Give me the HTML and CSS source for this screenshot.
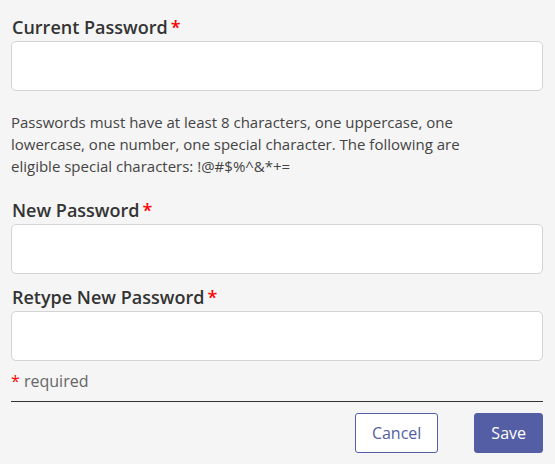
FILE: index.html
```html
<!DOCTYPE html>
<html lang="en">
<head>
<meta charset="utf-8">
<title>Change Password</title>
<link rel="stylesheet" href="styles.css">
</head>
<body>
<form class="form">
  <div class="field">
    <label class="label">Current Password<span class="req">*</span></label>
    <input class="input" type="password">
  </div>
  <p class="hint">Passwords must have at least 8 characters, one uppercase, one lowercase, one number, one special character. The following are eligible special characters: !@#$%^&amp;*+=</p>
  <div class="field">
    <label class="label">New Password<span class="req">*</span></label>
    <input class="input" type="password">
  </div>
  <div class="field field-tight">
    <label class="label">Retype New Password<span class="req">*</span></label>
    <input class="input" type="password">
  </div>
  <div class="required-note"><span class="req-small">*</span> required</div>
  <div class="actions">
    <button type="button" class="btn btn-outline">Cancel</button>
    <button type="button" class="btn btn-primary">Save</button>
  </div>
</form>
</body>
</html>
```

FILE: styles.css
```css
* {
  box-sizing: border-box;
}

html, body {
  margin: 0;
  background: #f5f5f5;
}

body {
  font-family: "Open Sans", "Noto Sans", sans-serif;
  color: #333;
}

.form {
  padding: 15px 12px 11px 11px;
  display: flex;
  flex-direction: column;
}

.field {
  display: flex;
  flex-direction: column;
}

.field-tight {
  margin-top: 11px;
}

.label {
  font-size: 18px;
  font-weight: 600;
  line-height: 24px;
  color: #333;
  margin: 0 0 2px 1px;
}

.req {
  color: #f00;
  margin-left: 3px;
}

.input {
  display: block;
  width: 100%;
  height: 50px;
  margin: 0;
  background: #fff;
  border: 1px solid #d4d4d4;
  border-radius: 5px;
  font: inherit;
  font-size: 16px;
  padding: 0 12px;
}

.hint {
  margin: 20px 0 21px;
  max-width: 480px;
  font-size: 15px;
  line-height: 22px;
  color: #444;
}

.required-note {
  margin-top: 9px;
  font-size: 16px;
  line-height: 22px;
  color: #666;
}

.req-small {
  color: #f00;
}

.actions {
  margin-top: 9px;
  border-top: 1px solid #333;
  padding-top: 11px;
  display: flex;
  justify-content: flex-end;
  gap: 36px;
}

.btn {
  height: 40px;
  padding: 0 16px;
  border-radius: 3px;
  font-family: "Open Sans", "Noto Sans", sans-serif;
  font-size: 16px;
  line-height: 38px;
  cursor: pointer;
}

.btn-outline {
  background: #fff;
  color: #545ea4;
  border: 1px solid #545ea4;
}

.btn-primary {
  background: #545ea4;
  color: #fff;
  border: 1px solid #545ea4;
}
```
